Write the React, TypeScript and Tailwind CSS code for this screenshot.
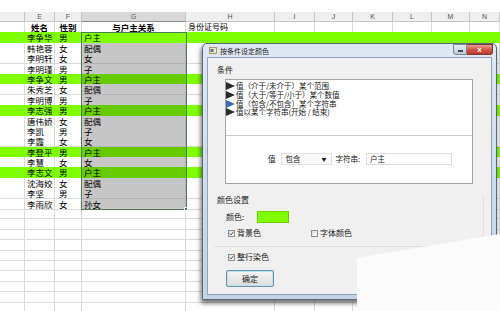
import React from "react";

const people: [string, string, string, boolean][] = [
  ["李争华", "男", "户主", true],
  ["韩艳蓉", "女", "配偶", false],
  ["李明轩", "女", "女", false],
  ["李明瑾", "男", "子", false],
  ["李争文", "男", "户主", true],
  ["朱秀芝", "女", "配偶", false],
  ["李明博", "男", "子", false],
  ["李志强", "男", "户主", true],
  ["唐伟娇", "女", "配偶", false],
  ["李凯", "男", "子", false],
  ["李霞", "女", "女", false],
  ["李登平", "男", "户主", true],
  ["李慧", "女", "女", false],
  ["李志文", "男", "户主", true],
  ["沈海姣", "女", "配偶", false],
  ["李坚", "男", "子", false],
  ["李雨欣", "女", "孙女", false],
];

const letters = ["", "E", "F", "G", "H", "I", "J", "K", "L", "M", "N"];
const gridCols =
  "grid grid-cols-[25px_30px_27px_104px_89px_40px_38px_40px_39px_38px_30px]";
const cjk = "font-['Noto_Sans_CJK_SC','Noto_Sans',sans-serif]";

function Arrow({ blue }: { blue?: boolean }) {
  return (
    <svg width="9" height="8" viewBox="0 0 9 8" className="shrink-0">
      <polygon points="0,0 9,4 0,8" fill={blue ? "#3c6db3" : "#2b2b2b"} />
    </svg>
  );
}

function Check({ on }: { on: boolean }) {
  return (
    <span className="w-[7px] h-[7px] border border-[#8e8f8f] bg-gradient-to-br from-[#dcdcdc] to-[#fbfbfb] flex items-center justify-center">
      {on && (
        <svg width="5" height="5" viewBox="0 0 5 5">
          <path d="M0.5 2.6 L2 4 L4.5 0.8" stroke="#4a5a78" strokeWidth="1" fill="none" />
        </svg>
      )}
    </span>
  );
}

export default function App() {
  const emptyRows = Array.from({ length: 10 });
  return (
    <div className={`relative w-[500px] h-[311px] overflow-hidden bg-white ${cjk} text-black`}>
      <div className="h-[12px] bg-white" />
      {/* column letters */}
      <div className={`${gridCols} h-[10px]`}>
        {letters.map((l, i) => (
          <div
            key={i}
            className={`border-r border-b border-[#c6c6c6] text-[7px] leading-[9px] text-center text-[#555] font-['Liberation_Sans',sans-serif] ${
              l === "G" ? "bg-[#d9d9d9] border-b-[#8a8a8a]" : "bg-[#eeeeee]"
            }`}
          >
            {l}
          </div>
        ))}
      </div>
      {/* header labels */}
      <div className={`${gridCols} h-[10.4px] text-[8.5px] leading-[10px]`}>
        <div className="border-r border-b border-[#dadada]" />
        <div className="border-r border-b border-[#dadada] font-bold text-center">姓名</div>
        <div className="border-r border-b border-[#dadada] font-bold text-center">性别</div>
        <div className="border-r border-b border-[#dadada] font-bold text-center">与户主关系</div>
        <div className="border-r border-b border-[#dadada] pl-[2px] text-[8px]">身份证号码</div>
        {letters.slice(5).map((_, i) => (
          <div key={i} className="border-r border-b border-[#dadada]" />
        ))}
      </div>
      {people.map(([name, sex, rel, green], i) => {
        const base = green
          ? "bg-[#80ff00] border-[#80ff00]"
          : "bg-white border-[#dadada]";
        const g = green
          ? i === 0
            ? "bg-[#80ff00] border-[#80ff00]"
            : "bg-[#66cc00] border-[#66cc00]"
          : "bg-[#c6c6c6] border-[#b4b4b4]";
        return (
          <div key={i} className={`${gridCols} h-[10.4px] text-[8.5px] leading-[10px]`}>
            <div className={`border-r border-b ${base}`} />
            <div className={`border-r border-b ${base} pl-[2px] whitespace-nowrap`}>{name}</div>
            <div className={`border-r border-b ${base} pl-[4px]`}>{sex}</div>
            <div className={`border-r border-b ${g} pl-[2px]`}>{rel}</div>
            {letters.slice(4).map((_, j) => (
              <div key={j} className={`border-r border-b ${base}`} />
            ))}
          </div>
        );
      })}
      {emptyRows.map((_, i) => (
        <div key={i} className={`${gridCols} h-[10.4px]`}>
          {letters.map((_, j) => (
            <div key={j} className="border-r border-b border-[#dadada]" />
          ))}
        </div>
      ))}

      {/* selection G2:G18 */}
      <div className="absolute left-[81px] top-[31.6px] w-[106px] h-[178px] border-[1.5px] border-[#4f7a5a]" />
      <div className="absolute left-[184px] top-[207px] w-[4px] h-[4px] bg-[#4f7a5a] border border-white" />

      {/* dialog */}
      <div className="absolute left-[202px] top-[43px] w-[295px] h-[257px] rounded-t-[5px] border border-[#5b6878] bg-gradient-to-b from-[#dfe9f4] via-[#cfdceb] to-[#c3d3e5] shadow-[-1px_3px_5px_rgba(0,0,0,0.6)] flex flex-col">
        <div className="h-[13px] flex items-center pl-[6px] relative">
          <svg width="8" height="7" viewBox="0 0 8 7" className="mr-[3px]">
            <rect x="0.5" y="0.5" width="7" height="6" fill="#f4e6a6" stroke="#8a7a3a" strokeWidth="0.7" />
            <rect x="1.5" y="2" width="3" height="3" fill="#4a78c0" />
          </svg>
          <span className="text-[7px] leading-[8px] text-[#222]">按条件设定颜色</span>
          <div className="absolute right-[3px] top-0 flex">
            <div className="w-[14px] h-[11px] rounded-bl-[3px] border border-[#7b8796] bg-gradient-to-b from-[#e8eef5] to-[#b9c8d9] flex items-end justify-center pb-[2px]">
              <div className="w-[5px] h-[2px] bg-[#3e4a58]" />
            </div>
            <div className="w-[26px] h-[11px] rounded-br-[3px] border border-l-0 border-[#7a3a33] bg-gradient-to-b from-[#e99d93] via-[#d0584c] to-[#c0392b] flex items-center justify-center text-white text-[8px] leading-[8px] font-bold font-['Liberation_Sans',sans-serif]">
              x
            </div>
          </div>
        </div>
        <div className="mx-[4px] h-[238px] border border-[#8fa3ba] bg-[#f0f0f0] text-[8px] leading-[10px] text-[#222]">
          <div className="pl-[9px] pt-[7px] h-[17px]">条件</div>
          <div className="ml-[17px] mt-[4px] w-[248px] h-[105px] border border-[#a3a3a3] bg-white flex flex-col">
            <div className="h-[56px] border-b border-[#c9c9c9] pt-[2px] flex flex-col">
              {[
                "值（介于/未介于）某个范围",
                "值（大于/等于/小于）某个数值",
                "值（包含/不包含）某个字符串",
                "值以某个字符串(开始 / 结束)",
              ].map((t, i) => (
                <div key={i} className="h-[8.7px] flex items-center text-[7.5px] leading-[8px] whitespace-nowrap">
                  <Arrow blue={i === 2} />
                  <span className="ml-[1px]">{t}</span>
                </div>
              ))}
            </div>
            <div className="flex-1 flex items-center pl-[42px] pb-[2px] text-[7.5px]">
              <span>值</span>
              <div className="ml-[5px] w-[51px] h-[12px] border border-[#e2e2e2] bg-[#fafafa] flex items-center justify-between px-[4px]">
                <span>包含</span>
                <span className="text-[5px] leading-[6px]">▼</span>
              </div>
              <span className="ml-[4px]">字符串:</span>
              <div className="ml-[6px] w-[86px] h-[12px] border border-[#dcdcdc] bg-white flex items-center pl-[3px]">
                户主
              </div>
            </div>
          </div>
          <div className="ml-[6px] mt-[11px] w-[270px] h-[52px] border-r border-b border-[#e0e0e0] flex flex-col">
            <div className="pl-[3px] h-[10px]">颜色设置</div>
            <div className="pl-[12px] mt-[6px] h-[12px] flex items-center">
              <span>颜色:</span>
              <div className="ml-[13px] w-[32px] h-[12px] bg-[#80ff00] border border-[#6ad000]" />
            </div>
            <div className="pl-[14px] mt-[5px] h-[10px] flex items-center">
              <Check on />
              <span className="ml-[2px] w-[74px]">背景色</span>
              <Check on={false} />
              <span className="ml-[2px]">字体颜色</span>
            </div>
          </div>
          <div className="pl-[20px] mt-[5px] h-[10px] flex items-center">
            <Check on />
            <span className="ml-[2px]">整行染色</span>
          </div>
          <div className="ml-[18px] mt-[8px] w-[48px] h-[17px] rounded-[2px] border border-[#6f8fab] bg-gradient-to-b from-[#f6f6f6] to-[#dcdcdc] flex items-center justify-center shadow-[inset_0_0_0_1px_#b7e3f5]">
            确定
          </div>
        </div>
      </div>

      {/* washed-out corner */}
      <div className="absolute left-[357px] top-[234px] w-[143px] h-[77px] bg-[#fbfbfb] [clip-path:polygon(0_24px,100%_0,100%_100%,0_100%)]" />
    </div>
  );
}
